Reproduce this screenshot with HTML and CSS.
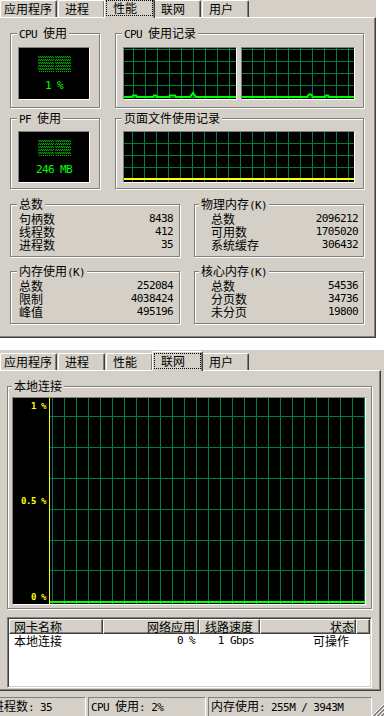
FILE: index.html
```html
<!DOCTYPE html>
<html lang="zh-CN">
<head>
  <meta charset="UTF-8" />
  <meta name="viewport" content="width=device-width, initial-scale=1" />
  <title>Windows 任务管理器</title>
  <link rel="stylesheet" href="styles.css">
</head>
<body>

  <!-- PERFORMANCE TAB -->
  <div class="win win-top">
    <div class="tabs">
      <div class="tab first">应用程序</div>
      <div class="tab">进程</div>
      <div class="tab on">性能</div>
      <div class="tab">联网</div>
      <div class="tab">用户</div>
    </div>

    <div class="page page-top">
      <div class="row r1">
        <fieldset class="grp meter-grp">
          <legend><span class="m">CPU </span>使用</legend>
          <div class="in">
            <div class="meter">
              <div class="leds"><i></i><i></i></div>
              <div class="mval m">1 %</div>
            </div>
          </div>
        </fieldset>
        <fieldset class="grp hist-grp">
          <legend><span class="m">CPU </span>使用记录</legend>
          <div class="in graphs">
            <div class="graph g1">
              <svg width="112" height="51"><polyline points="0,49 8,49 9,47.5 12,47.5 13,49 29,49 30,47.5 32,47.5 33,49 45,49 46,47.5 51,47.5 52,49 66,49 69,45 72,49 112,49" fill="none" stroke="#0f0" stroke-width="2"/></svg>
            </div>
            <div class="graph g2">
              <svg width="112" height="51"><polyline points="0,49 65,49 67,46.5 69,46.5 71,49 83,49 84,47.5 86,47.5 87,49 112,49" fill="none" stroke="#0f0" stroke-width="2"/></svg>
            </div>
          </div>
        </fieldset>
      </div>

      <div class="row r2">
        <fieldset class="grp meter-grp">
          <legend><span class="m">PF </span>使用</legend>
          <div class="in">
            <div class="meter">
              <div class="leds"><i></i><i></i></div>
              <div class="mval m">246 MB</div>
            </div>
          </div>
        </fieldset>
        <fieldset class="grp hist-grp">
          <legend>页面文件使用记录</legend>
          <div class="in">
            <div class="graph gpf">
              <svg width="230" height="50"><rect x="0" y="46" width="230" height="2" fill="#ff0"/></svg>
            </div>
          </div>
        </fieldset>
      </div>

      <div class="row r3">
        <fieldset class="grp stat">
          <legend>总数</legend>
          <div class="in">
            <div class="kv"><span>句柄数</span><span class="m">8438</span></div>
            <div class="kv"><span>线程数</span><span class="m">412</span></div>
            <div class="kv"><span>进程数</span><span class="m">35</span></div>
          </div>
        </fieldset>
        <fieldset class="grp stat rt">
          <legend>物理内存<span class="m">(K)</span></legend>
          <div class="in">
            <div class="kv"><span>总数</span><span class="m">2096212</span></div>
            <div class="kv"><span>可用数</span><span class="m">1705020</span></div>
            <div class="kv"><span>系统缓存</span><span class="m">306432</span></div>
          </div>
        </fieldset>
      </div>

      <div class="row r4">
        <fieldset class="grp stat">
          <legend>内存使用<span class="m">(K)</span></legend>
          <div class="in">
            <div class="kv"><span>总数</span><span class="m">252084</span></div>
            <div class="kv"><span>限制</span><span class="m">4038424</span></div>
            <div class="kv"><span>峰值</span><span class="m">495196</span></div>
          </div>
        </fieldset>
        <fieldset class="grp stat rt">
          <legend>核心内存<span class="m">(K)</span></legend>
          <div class="in">
            <div class="kv"><span>总数</span><span class="m">54536</span></div>
            <div class="kv"><span>分页数</span><span class="m">34736</span></div>
            <div class="kv"><span>未分页</span><span class="m">19800</span></div>
          </div>
        </fieldset>
      </div>
    </div>
  </div>

  <!-- NETWORKING TAB -->
  <div class="win win-bot">
    <div class="tabs">
      <div class="tab first">应用程序</div>
      <div class="tab">进程</div>
      <div class="tab">性能</div>
      <div class="tab on">联网</div>
      <div class="tab">用户</div>
    </div>

    <div class="page page-bot">
      <fieldset class="grp net-grp">
        <legend>本地连接</legend>
        <div class="in">
          <div class="ngraph">
            <svg width="352" height="206">
              <defs>
                <pattern id="nv" x="39" y="0" width="12" height="206" patternUnits="userSpaceOnUse">
                  <rect width="1" height="206" fill="#008040"/>
                </pattern>
              </defs>
              <rect x="37" y="0" width="315" height="206" fill="url(#nv)"/>
              <g fill="#008040">
                <rect x="36" y="18" width="316" height="1"/>
                <rect x="36" y="49" width="316" height="1"/>
                <rect x="36" y="80" width="316" height="1"/>
                <rect x="36" y="111" width="316" height="1"/>
                <rect x="36" y="142" width="316" height="1"/>
                <rect x="36" y="172" width="316" height="1"/>
              </g>
              <rect x="36" y="0" width="1" height="206" fill="#ff0"/>
              <rect x="37" y="203" width="315" height="2" fill="#0f0"/>
              <g class="axis" fill="#ff0" text-anchor="end">
                <text x="33" y="10.5">1 %</text>
                <text x="33" y="105.5">0.5 %</text>
                <text x="33" y="201.5">0 %</text>
              </g>
            </svg>
          </div>
        </div>
      </fieldset>

      <div class="list">
        <div class="lrow lhead">
          <div class="c1">网卡名称</div>
          <div class="c2">网络应用</div>
          <div class="c3">线路速度</div>
          <div class="c4">状态</div>
          <div></div>
        </div>
        <div class="lrow litem">
          <div class="c1">本地连接</div>
          <div class="c2 m">0 %</div>
          <div class="c3 m">1 Gbps</div>
          <div class="c4">可操作</div>
          <div></div>
        </div>
      </div>
    </div>

    <!-- STATUS BAR -->
    <div class="status">
      <div class="sb sb1">进程数<span class="m">: 35</span></div>
      <div class="sb sb2"><span class="m">CPU </span>使用<span class="m">: 2%</span></div>
      <div class="sb sb3">内存使用<span class="m">: 255M / 3943M</span></div>
      <svg class="grip" width="12" height="12">
        <path d="M12 0L0 12M12 4L4 12M12 8L8 12" stroke="#fff"/>
        <path d="M12 1L1 12M12 2L2 12M12 5L5 12M12 6L6 12M12 9L9 12M12 10L10 12" stroke="#808080"/>
      </svg>
    </div>
  </div>

</body>
</html>
```

FILE: styles.css
```css
* {
  box-sizing: border-box;
}

body {
  margin: 0;
  width: 384px;
  height: 716px;
  overflow: hidden;
  background: #fff;
  color: #000;
  font-family: "Noto Sans CJK SC", sans-serif;
  font-size: 12px;
  line-height: 12px;
}

/* half-width latin text */
.m {
  font-family: "DejaVu Sans Mono", monospace;
  font-size: 11px;
  letter-spacing: -0.6px;
}

.win {
  background: #d4d0c8;
}

.win-top {
  width: 376px;
  height: 340px;
  margin-top: -2px;
}

.win-bot {
  width: 384px;
  height: 366px;
  margin-top: 12px;
  padding-top: 1px;
}

/* tabs */
.tabs {
  display: flex;
  align-items: flex-end;
  height: 19px;
}

.tab {
  height: 17px;
  margin-right: 1px;
  padding: 0 15px 0 6px;
  border: 1px solid #fff;
  border-bottom: 0;
  border-right-color: #404040;
  border-radius: 2px 2px 0 0;
  box-shadow: inset -1px 0 #808080;
  line-height: 16px;
  white-space: nowrap;
}

.tab.first {
  padding: 0 4px 0 3px;
}

.tab.on {
  position: relative;
  z-index: 1;
  height: 20px;
  margin: 0 -1px -1px -2px;
  padding: 1px 17px 0 8px;
  background: #d4d0c8;
  outline: 1px dotted #000;
  outline-offset: -3px;
}

.page {
  height: 321px;
  border-top: 1px solid #fff;
  border-right: 1px solid #404040;
  border-bottom: 1px solid #404040;
  box-shadow: inset -1px -1px #808080;
}

.page-top {
  width: 376px;
  padding: 9px 0 0 10px;
}

.page-bot {
  width: 381px;
  padding: 9px 0 0 7px;
}

.row {
  display: flex;
  gap: 15px;
}

.r2 { margin-top: 4px; }
.r3 { margin-top: 9px; gap: 14px; }
.r4 { margin-top: 8px; gap: 14px; }

/* group boxes */
.grp {
  margin: 0;
  padding: 0;
  min-width: 0;
  border: 1px solid #808080;
  box-shadow: inset 1px 1px #fff, 1px 1px #fff;
}

.grp legend {
  height: 12px;
  margin-left: 6px;
  padding: 0 2px;
  background: #d4d0c8;
}

.meter-grp {
  width: 90px;
}

.hist-grp {
  width: 249px;
}

.r1 .in {
  padding: 8px 0 7px 7px;
}

.r2 .in {
  padding: 7px 0 5px 7px;
}

/* meters */
.meter {
  display: flex;
  flex-direction: column;
  align-items: center;
  width: 72px;
  height: 53px;
  padding-top: 7px;
  background: #000;
  border: 1px solid;
  border-color: #808080 #fff #fff #808080;
}

.r2 .meter {
  height: 52px;
}

.leds {
  display: flex;
  gap: 1px;
}

.leds i {
  display: block;
  width: 16px;
  height: 17px;
  background:
    linear-gradient(#000 1px, transparent 1px) 0 0 / 100% 3px,
    repeating-conic-gradient(#00a000 0 25%, #003000 0 50%) 0 0 / 2px 2px;
}

.mval {
  margin-top: 8px;
  color: #0f0;
  line-height: 12px;
}

/* history graphs */
.graphs {
  display: flex;
  gap: 4px;
}

.graph {
  height: 53px;
  background-color: #000;
  background-image:
    linear-gradient(90deg, #008040 1px, transparent 1px),
    linear-gradient(#008040 1px, transparent 1px);
  background-size: 12px 12px;
  border: 1px solid;
  border-color: #808080 #fff #fff #808080;
}

.graph svg {
  display: block;
}

.g1 {
  width: 114px;
  background-position: 9px 1px;
}

.g2 {
  width: 114px;
  background-position: 10px 1px;
}

.gpf {
  width: 232px;
  height: 52px;
  background-position: 8px 11px;
}

/* totals */
.stat {
  width: 170px;
}

.stat .in {
  padding: 2px 6px 5px 8px;
}

.stat.rt legend {
  margin-left: 4px;
}

.stat.rt .in {
  padding: 2px 5px 5px 16px;
}

.kv {
  display: flex;
  justify-content: space-between;
  line-height: 13px;
}

/* networking */
.net-grp {
  width: 365px;
}

.net-grp legend {
  margin-left: 4px;
}

.net-grp .in {
  padding: 5px 5px 3px 4px;
}

.ngraph {
  width: 354px;
  height: 208px;
  background: #000;
  border: 1px solid;
  border-color: #808080 #fff #fff #808080;
}

.ngraph svg {
  display: block;
}

.axis {
  font-family: "DejaVu Sans Mono", monospace;
  font-size: 9px;
  font-weight: bold;
  letter-spacing: -0.4px;
}

.list {
  width: 365px;
  height: 71px;
  margin-top: 8px;
  padding: 1px;
  background: #fff;
  border: 1px solid;
  border-color: #808080 #fff #fff #808080;
  box-shadow: inset 1px 1px #404040, inset -1px -1px #d4d0c8;
}

.lrow {
  display: grid;
  grid-template-columns: 94px 96px 61px 96px 1fr;
  line-height: 13px;
  white-space: nowrap;
}

.lhead div {
  height: 15px;
  background: #d4d0c8;
  border: 1px solid;
  border-color: #fff #404040 #404040 #fff;
  box-shadow: inset -1px -1px #808080;
}

.lhead .c1 { padding-left: 4px; }
.lhead .c2 { padding-right: 3px; text-align: right; }
.lhead .c3 { padding-right: 6px; text-align: right; }
.lhead .c4 { padding-right: 1px; text-align: right; }

.litem .c1 { padding-left: 5px; }
.litem .c2 { padding-right: 4px; text-align: right; }
.litem .c3 { padding-right: 6px; text-align: right; }
.litem .c4 { padding-right: 7px; text-align: right; }

/* status bar */
.status {
  display: flex;
  align-items: flex-start;
  height: 25px;
  padding-top: 6px;
}

.sb {
  height: 20px;
  padding: 1px 0 0 2px;
  border: 1px solid;
  border-color: #808080 #fff #fff #808080;
  line-height: 13px;
  white-space: nowrap;
  overflow: hidden;
}

.sb1 {
  width: 97px;
  margin-left: -11px;
}

.sb2 {
  width: 118px;
  margin-left: 2px;
}

.sb3 {
  width: 164px;
  margin-left: 2px;
}

.grip {
  display: block;
  margin: 7px 0 0 auto;
}
```
